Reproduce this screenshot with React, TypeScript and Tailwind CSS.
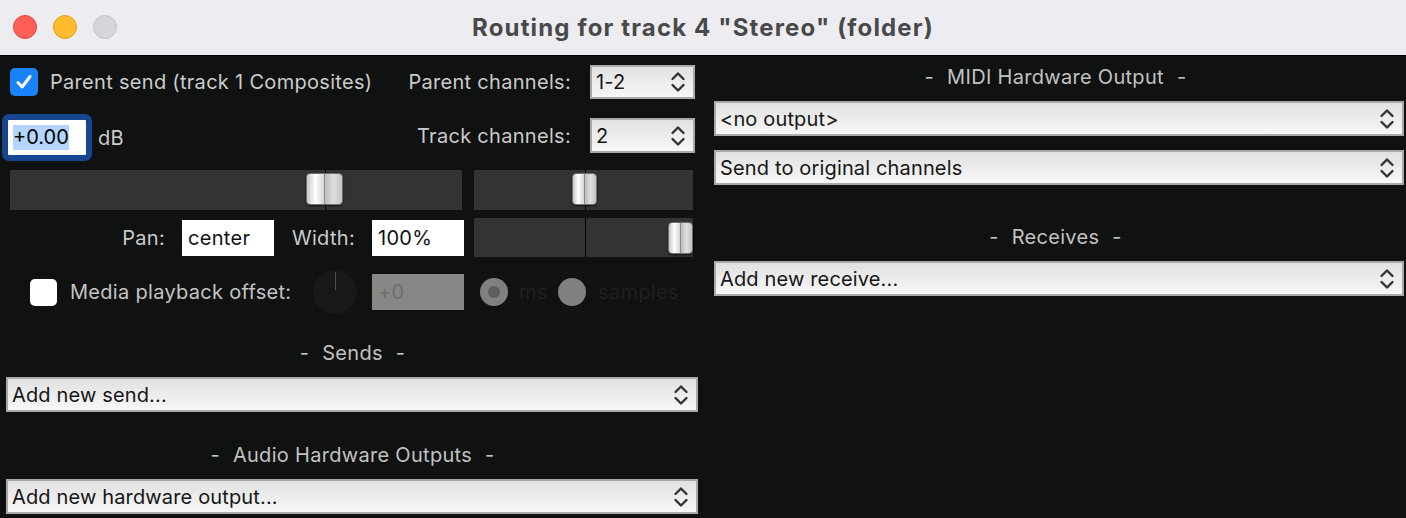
import React from 'react';

const font = { fontFamily: 'Inter, "Noto Sans", sans-serif' };

const Chevrons = () => (
  <svg width="16" height="22" viewBox="0 0 16 22" className="shrink-0">
    <path d="M2.5 8 L8 2.5 L13.5 8" fill="none" stroke="#333" strokeWidth="2.4" strokeLinecap="round" strokeLinejoin="round" />
    <path d="M2.5 14 L8 19.5 L13.5 14" fill="none" stroke="#333" strokeWidth="2.4" strokeLinecap="round" strokeLinejoin="round" />
  </svg>
);

const Select = ({ label, className = '' }: { label: string; className?: string }) => (
  <div
    className={`flex items-center justify-between border-2 border-[#a9a9a9] bg-linear-to-b from-[#e1e1e1] to-[#f7f7f7] pl-[4px] pr-[7px] text-[20px] tracking-[0.15px] text-[#161616] ${className}`}
  >
    <span className="truncate">{label}</span>
    <Chevrons />
  </div>
);

const Knob = ({ wide }: { wide?: boolean }) => (
  <div
    className={`flex h-[32px] ${wide ? 'w-[37px]' : 'w-[25px]'} overflow-hidden rounded-[4px] border border-[#6f6f6f] shadow-[0_1px_2px_rgba(0,0,0,0.6)]`}
  >
    <div className="flex-1 bg-linear-to-r from-[#c9c9c9] via-white to-[#d5d5d5]" />
    <div className="w-px bg-[#8a8a8a]" />
    <div className="flex-1 bg-linear-to-r from-[#bdbdbd] via-[#dedede] to-[#c4c4c4]" />
  </div>
);

const Header = ({ children, className = '' }: { children: string; className?: string }) => (
  <div className={`flex h-[24px] items-center justify-center text-[20px] text-[#c2c2c2] ${className}`}>
    <span>-</span>
    <span className="mx-[13px]">{children}</span>
    <span>-</span>
  </div>
);

export default function App() {
  return (
    <div className="flex h-[518px] w-[1406px] flex-col overflow-hidden bg-[#101111]" style={font}>
      {/* title bar */}
      <div className="relative flex h-[56px] shrink-0 items-center justify-center border-b border-black bg-[#ededf1]">
        <div className="absolute left-[13px] top-[15px] flex gap-[16px]">
          <div className="h-[24px] w-[24px] rounded-full border border-[#e2463f] bg-[#fe5f57]" />
          <div className="h-[24px] w-[24px] rounded-full border border-[#e1a116] bg-[#febc2e]" />
          <div className="h-[24px] w-[24px] rounded-full border border-[#c4c4c8] bg-[#d6d6da]" />
        </div>
        <span className="text-[24px] font-bold tracking-[1.15px] text-[#494949]">Routing for track 4 "Stereo" (folder)</span>
      </div>

      <div className="flex flex-1 tracking-[0.3px]">
        {/* left column */}
        <div className="flex w-[705px] shrink-0 flex-col">
          <div className="mt-[9px] flex h-[34px] items-center pr-[10px]">
            <div className="ml-[10px] flex h-[28px] w-[28px] items-center justify-center rounded-[5px] bg-[#1a82fb]">
              <svg width="20" height="20" viewBox="0 0 20 20">
                <path d="M4 10.5 L8.2 15 L16 4.5" fill="none" stroke="white" strokeWidth="3" strokeLinecap="round" strokeLinejoin="round" />
              </svg>
            </div>
            <span className="ml-[12px] text-[20px] text-[#cbcbcb]">Parent send (track 1 Composites)</span>
            <span className="ml-auto mr-[19px] text-[20px] text-[#cbcbcb]">Parent channels:</span>
            <Select label="1-2" className="h-[34px] w-[105px]" />
          </div>

          <div className="mt-[15px] flex h-[47px] pr-[10px]">
            <div className="ml-[2px] flex h-[47px] w-[90px] rounded-[7px] border-[6px] border-[#174690] bg-white pl-[5px]">
              <span className="self-center bg-[#b4d5fe] text-[20px] leading-[25px] tracking-normal text-black">+0.00</span>
            </div>
            <span className="ml-[6px] self-center text-[20px] text-[#cbcbcb]">dB</span>
            <div className="ml-auto mt-[4px] flex h-[35px] items-center">
              <span className="mr-[19px] text-[20px] text-[#cbcbcb]">Track channels:</span>
              <Select label="2" className="h-[35px] w-[105px]" />
            </div>
          </div>

          <div className="mt-[9px] flex h-[40px]">
            <div className="relative ml-[10px] flex h-[40px] w-[452px] items-center bg-[#333333]">
              <div className="absolute left-[315px] top-0 h-full w-px bg-black" />
              <div className="absolute left-[296px] top-[3px]">
                <Knob wide />
              </div>
            </div>
            <div className="relative ml-[12px] h-[40px] w-[219px] bg-[#333333]">
              <div className="absolute left-[111px] top-0 h-full w-px bg-black" />
              <div className="absolute left-[98px] top-[3px]">
                <Knob />
              </div>
            </div>
          </div>

          <div className="mt-[8px] flex h-[39px] items-center">
            <div className="flex w-[464px] items-center text-[20px]">
              <span className="w-[165px] text-right text-[#cbcbcb]">Pan:</span>
              <div className="ml-[17px] flex h-[36px] w-[92px] items-center bg-white pl-[6px] text-[#111]">center</div>
              <span className="w-[81px] text-right text-[#cbcbcb]">Width:</span>
              <div className="ml-[17px] flex h-[36px] w-[92px] items-center bg-white pl-[6px] text-[#111]">100%</div>
            </div>
            <div className="relative ml-[10px] h-[39px] w-[219px] bg-[#333333]">
              <div className="absolute left-[111px] top-0 h-full w-px bg-black" />
              <div className="absolute left-[194px] top-[4px]">
                <Knob />
              </div>
            </div>
          </div>

          <div className="mt-[17px] flex h-[36px] items-center text-[20px]">
            <div className="ml-[30px] h-[27px] w-[27px] rounded-[5px] bg-white" />
            <span className="ml-[13px] w-[243px] text-[#c4c4c4]">Media playback offset:</span>
            <div className="relative h-[44px] w-[44px] rounded-full bg-[#171818]">
              <div className="absolute left-[22px] top-[2px] h-[18px] w-px bg-[#4d4e4e]" />
            </div>
            <div className="ml-[15px] flex h-[36px] w-[92px] items-center bg-[#868886] pl-[6px] text-[#6d6f6e]">+0</div>
            <div className="ml-[16px] flex h-[28px] w-[28px] items-center justify-center rounded-full bg-[#808080]">
              <div className="h-[12px] w-[12px] rounded-full bg-[#5d5d5d]" />
            </div>
            <span className="ml-[11px] w-[39px] text-[#1f2020]">ms</span>
            <div className="h-[28px] w-[28px] rounded-full bg-[#808080]" />
            <span className="ml-[12px] text-[#1f2020]">samples</span>
          </div>

          <Header className="mt-[31px]">Sends</Header>
          <Select label="Add new send..." className="ml-[6px] mt-[12px] h-[35px] w-[692px]" />

          <Header className="mt-[31px]">Audio Hardware Outputs</Header>
          <Select label="Add new hardware output..." className="ml-[6px] mt-[12px] h-[35px] w-[692px]" />
        </div>

        {/* right column */}
        <div className="flex flex-1 flex-col">
          <Header className="mt-[9px]">MIDI Hardware Output</Header>
          <Select label="<no output>" className="ml-[9px] mr-[2px] mt-[12px] h-[35px]" />
          <Select label="Send to original channels" className="ml-[9px] mr-[2px] mt-[14px] h-[35px]" />
          <Header className="mt-[40px]">Receives</Header>
          <Select label="Add new receive..." className="ml-[9px] mr-[2px] mt-[12px] h-[35px]" />
        </div>
      </div>
    </div>
  );
}
